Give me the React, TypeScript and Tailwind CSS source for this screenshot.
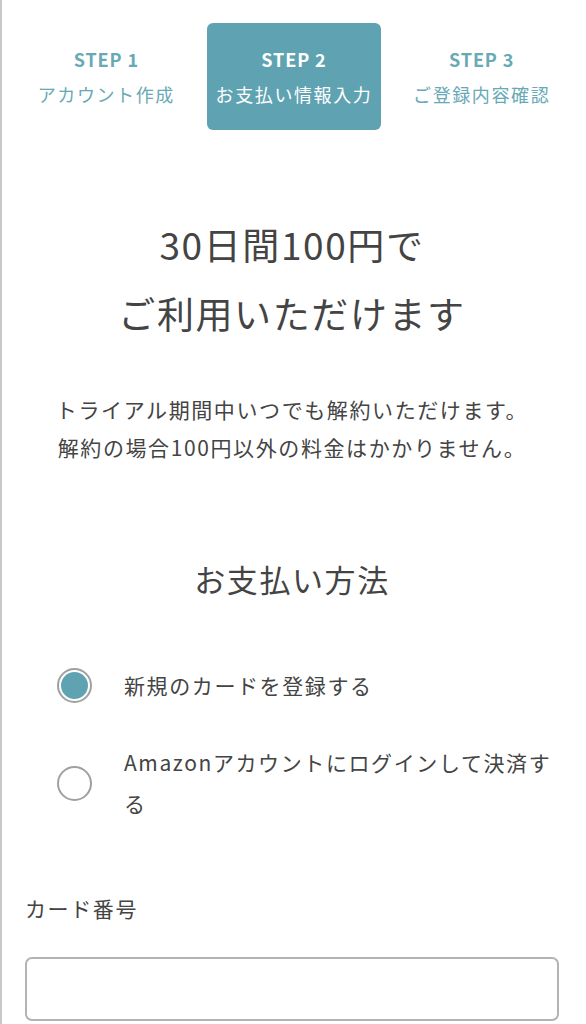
import { useState } from "react";

const steps = [
  { no: "STEP 1", label: "アカウント作成" },
  { no: "STEP 2", label: "お支払い情報入力" },
  { no: "STEP 3", label: "ご登録内容確認" },
];

const font = {
  fontFamily: '"Noto Sans CJK JP", "Noto Sans", sans-serif',
};

export default function App() {
  const [method, setMethod] = useState<"card" | "amazon">("card");

  return (
    <main
      className="min-h-screen bg-white border-l-2 border-[#c9c9c9] text-[#444] tracking-[0.1em]"
      style={font}
    >
      {/* Steps */}
      <div className="grid grid-cols-3 gap-[13px] px-[17px] pt-[23px]">
        {steps.map((s, i) => (
          <div
            key={s.no}
            className={`h-[107px] flex flex-col items-center justify-center rounded-[6px] ${
              i === 1 ? "bg-[#5fa3b2] text-white" : "text-[#68a9b6]"
            }`}
          >
            <span className="text-[18px] font-bold leading-[35px] tracking-[0.05em]">
              {s.no}
            </span>
            <span className="text-[18px] leading-[35px] whitespace-nowrap">
              {s.label}
            </span>
          </div>
        ))}
      </div>

      <section className="pl-[23px] pr-[27px]">
        {/* Hero */}
        <h1 className="mt-[80px] text-center text-[37px] leading-[69px] font-normal">
          30日間100円で
          <br />
          ご利用いただけます
        </h1>
        <p className="mt-[42px] text-center text-[21px] leading-[38px]">
          トライアル期間中いつでも解約いただけます。
          <br />
          解約の場合100円以外の料金はかかりません。
        </p>

        {/* Payment method */}
        <h2 className="mt-[90px] text-center text-[31px] leading-[45px] font-normal">
          お支払い方法
        </h2>

        <div className="mt-[64px] flex flex-col gap-[36px]">
          <label
            className="flex items-center gap-[32px] pl-[32px] cursor-pointer"
            onClick={() => setMethod("card")}
          >
            <Radio checked={method === "card"} />
            <span className="text-[21px] leading-[41px]">新規のカードを登録する</span>
          </label>
          <label
            className="flex items-center gap-[32px] pl-[32px] cursor-pointer"
            onClick={() => setMethod("amazon")}
          >
            <Radio checked={method === "amazon"} />
            <span className="flex-1 text-[21px] leading-[41px]">
              Amazonアカウントにログインして決済する
            </span>
          </label>
        </div>

        {/* Card number */}
        <div className="mt-[68px]">
          <p className="text-[21px] leading-[33px]">カード番号</p>
          <input
            type="text"
            className="mt-[32px] w-full h-[64px] rounded-[7px] border-2 border-[#b3b3b3] px-3 outline-none"
          />
        </div>
      </section>
    </main>
  );
}

function Radio({ checked }: { checked: boolean }) {
  return (
    <span className="shrink-0 w-[35px] h-[35px] rounded-full border-2 border-[#a0a0a0] bg-white flex items-center justify-center">
      {checked && <span className="w-[27px] h-[27px] rounded-full bg-[#5fa3b2]" />}
    </span>
  );
}
